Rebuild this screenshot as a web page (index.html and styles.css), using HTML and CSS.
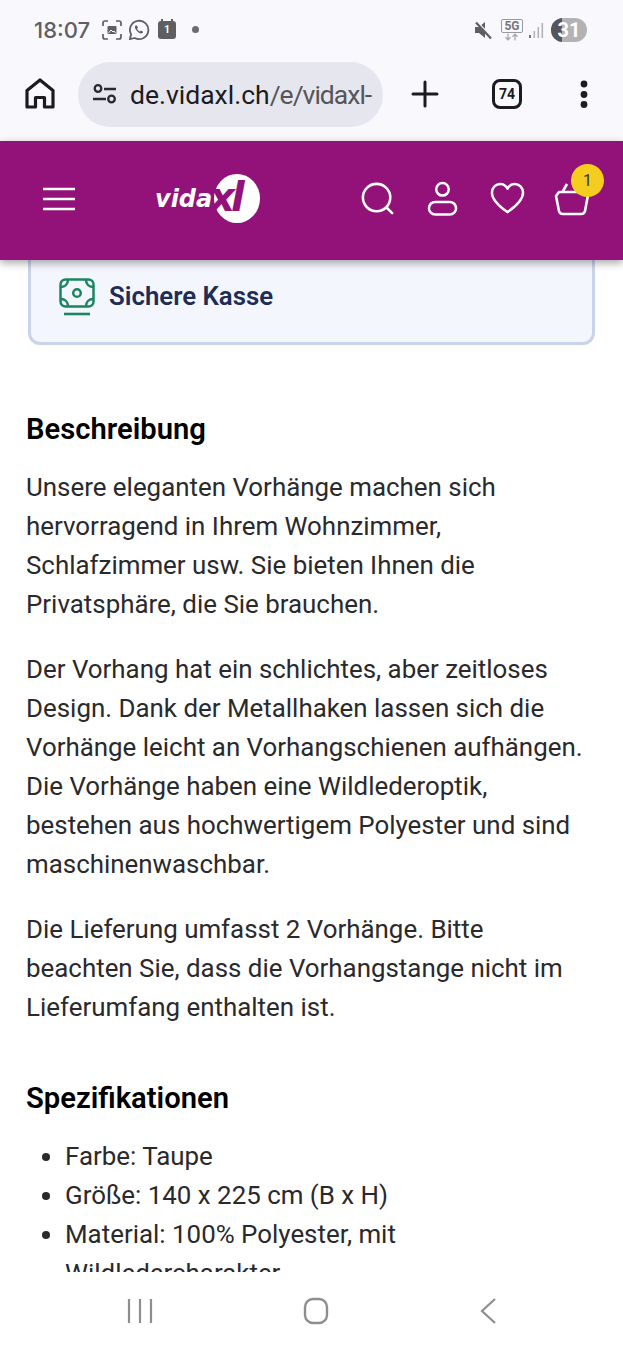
FILE: index.html
```html
<!DOCTYPE html>
<html lang="de">
<head>
  <meta charset="UTF-8">
  <meta name="viewport" content="width=device-width, initial-scale=1.0">
  <title>vidaXL</title>
  <link rel="stylesheet" href="styles.css">
</head>
<body>
  <div class="phone">
    <div class="chrome">
      <div class="status">
        <span class="time">18:07</span>
        <svg class="st-icon" width="22" height="22" viewBox="0 0 22 22" fill="none" stroke="#5f5f63" stroke-width="1.7">
          <path d="M2 7V4a2 2 0 0 1 2-2h3M15 2h3a2 2 0 0 1 2 2v3M20 15v3a2 2 0 0 1-2 2h-3M7 20H4a2 2 0 0 1-2-2v-3"/>
          <rect x="6.5" y="7" width="9" height="8" rx="1" fill="#5f5f63" stroke="none"/>
          <path d="M7.5 14l2.5-3 2 2 1-1 1.5 2" stroke="#f8f8fd" stroke-width="1"/>
        </svg>
        <svg class="st-icon" width="22" height="22" viewBox="0 0 22 22" fill="none" stroke="#5f5f63" stroke-width="1.8">
          <path d="M1.8 20.2l1.3-4.8A9.2 9.2 0 1 1 6.7 19z" stroke-linejoin="round"/>
          <path d="M7.6 6.6c-1 1-.8 2.6.6 4.5 1.5 2 3.4 3.4 4.9 3.4 1 0 2-.7 2-1.7l-2.2-1.2-1 1c-1-.3-2.2-1.5-2.8-2.8l.9-1-1-2.2z" fill="#5f5f63" stroke="none"/>
        </svg>
        <span class="cal">1</span>
        <span class="st-dot"></span>
        <span class="st-spacer"></span>
        <svg width="20" height="20" viewBox="0 0 20 20" class="st-mute">
          <path d="M1 7h4l6-5v16l-6-5H1z" fill="#5f5f63"/>
          <path d="M2 1l17 18" stroke="#f8f8fd" stroke-width="2.500"/>
          <path d="M2 2.500l15 16" stroke="#5f5f63" stroke-width="2.200"/>
        </svg>
        <div class="net">
          <span class="net-5g">5G</span>
          <svg width="16" height="8" viewBox="0 0 16 7" fill="none" stroke="#a8a8ac" stroke-width="1.300"><path d="M4 0v6M1.500 3.800L4 6.300l2.500-2.500M11 7V1M8.500 3.200L11 .7l2.500 2.500"/></svg>
        </div>
        <svg class="signal" width="16" height="20" viewBox="0 0 16 20" fill="#b4b4b8">
          <rect x="0" y="15" width="2" height="3" fill="#76767a"/><rect x="4.500" y="11" width="1.600" height="7"/><rect x="8.500" y="7" width="1.600" height="11"/><rect x="12.500" y="3" width="1.600" height="15"/>
        </svg>
        <div class="battery"><span class="batt-fill"></span><span class="batt-num">31</span></div>
      </div>
      <div class="toolbar">
        <svg class="home" width="32" height="34" viewBox="0 0 32 34" fill="none" stroke="#1c1c20" stroke-width="3.200" stroke-linejoin="round">
          <path d="M3 30V13.500L16 3l13 10.500V30h-8.500v-9.500h-9V30z"/>
        </svg>
        <div class="urlbar">
          <svg width="28" height="24" viewBox="0 0 28 24" fill="none" stroke="#2a2a2e" stroke-width="2.300">
            <circle cx="7" cy="6.500" r="3.300"/><path d="M13 7h12M2 17h13"/><circle cx="20.500" cy="17" r="3.300"/>
          </svg>
          <span class="url"><b>de.vidaxl.ch</b>/e/vidaxl-</span>
        </div>
        <svg class="plus" width="28" height="28" viewBox="0 0 28 28" stroke="#1c1c20" stroke-width="3" stroke-linecap="round"><path d="M14 2v24M2 14h24"/></svg>
        <span class="tabs">74</span>
        <svg class="more" width="10" height="28" viewBox="0 0 10 28" fill="#1c1c20"><circle cx="5" cy="4" r="3.400"/><circle cx="5" cy="14.500" r="3.400"/><circle cx="5" cy="24.500" r="3.400"/></svg>
      </div>
    </div>

    <header class="site-header">
      <svg class="burger" width="32" height="24" viewBox="0 0 32 24" stroke="#fff" stroke-width="2.400"><path d="M0 2h32M0 12h32M0 22h32"/></svg>
      <div class="logo"><span class="logo-vida">vida</span><span class="logo-xl">xl</span></div>
      <div class="header-icons">
        <svg width="34" height="34" viewBox="0 0 36 36" fill="none" stroke="#fff" stroke-width="2.700" stroke-linecap="round"><circle cx="16.500" cy="16.500" r="14.500"/><path d="M27 27l6 6"/></svg>
        <svg width="31" height="36" viewBox="0 0 32 36" fill="none" stroke="#fff" stroke-width="2.600"><circle cx="16" cy="8" r="6.500"/><rect x="2" y="21" width="28" height="13" rx="6.500"/></svg>
        <svg width="35" height="33" viewBox="0 0 36 34" fill="none" stroke="#fff" stroke-width="2.600" stroke-linejoin="round"><path d="M18 31C8 24 2 18 2 11c0-5 4-9 8.500-9 3.500 0 6 2 7.500 5 1.500-3 4-5 7.500-5C30 2 34 6 34 11c0 7-6 13-16 20z"/></svg>
        <div class="cart">
          <svg width="36" height="36" viewBox="0 0 36 36" fill="none" stroke="#fff" stroke-width="2.600" stroke-linejoin="round"><path d="M13 3L9 10M5 11h27l2 3-3 16a4 4 0 0 1-4 3H9a4 4 0 0 1-4-3L2 15z"/></svg>
          <span class="cart-badge">1</span>
        </div>
      </div>
    </header>

    <main class="content">
      <div class="secure-card">
        <svg width="36" height="38" viewBox="0 0 36 38" fill="none" stroke="#1b8560" stroke-width="2.500">
          <rect x="1.500" y="1.500" width="33" height="27" rx="5"/>
          <circle cx="18" cy="15" r="3.800"/>
          <path d="M2 9c4 0 7-3 7-7.500M34 9c-4 0-7-3-7-7.500M2 21c4 0 7 3 7 7.500M34 21c-4 0-7 3-7 7.500"/>
          <path d="M5 36h26" stroke-width="2.600"/>
        </svg>
        <span class="secure-label">Sichere Kasse</span>
      </div>

      <h2 class="first">Beschreibung</h2>
      <p>Unsere eleganten Vorhänge machen sich hervorragend in Ihrem Wohnzimmer, Schlafzimmer usw. Sie bieten Ihnen die Privatsphäre, die Sie brauchen.</p>
      <p>Der Vorhang hat ein schlichtes, aber zeitloses Design. Dank der Metallhaken lassen sich die Vorhänge leicht an Vorhangschienen aufhängen. Die Vorhänge haben eine Wildlederoptik, bestehen aus hochwertigem Polyester und sind maschinenwaschbar.</p>
      <p>Die Lieferung umfasst 2 Vorhänge. Bitte beachten Sie, dass die Vorhangstange nicht im Lieferumfang enthalten ist.</p>

      <h2>Spezifikationen</h2>
      <ul>
        <li>Farbe: Taupe</li>
        <li>Größe: 140 x 225 cm (B x H)</li>
        <li>Material: 100% Polyester, mit Wildledercharakter</li>
      </ul>
    </main>

    <nav class="android-nav">
      <svg width="26" height="26" viewBox="0 0 26 26" stroke="#8e8e92" stroke-width="2.200"><path d="M2 1v24M13 1v24M24 1v24"/></svg>
      <svg width="26" height="28" viewBox="0 0 26 28" fill="none" stroke="#8e8e92" stroke-width="2.400"><rect x="2" y="2" width="22" height="24" rx="8"/></svg>
      <svg width="18" height="28" viewBox="0 0 18 28" fill="none" stroke="#8e8e92" stroke-width="2.200"><path d="M16 2L3 14l13 12"/></svg>
    </nav>
  </div>
</body>
</html>
```

FILE: styles.css
```css
html, body {
  margin: 0;
  padding: 0;
  background: #fff;
}
.phone {
  width: 623px;
  height: 1350px;
  display: flex;
  flex-direction: column;
  overflow: hidden;
  font-family: Roboto, "Noto Sans", sans-serif;
}

/* browser chrome */
.chrome {
  height: 141px;
  flex: none;
  background: #f8f8fd;
  box-sizing: border-box;
}
.status {
  height: 61px;
  padding: 0 36px 2px 34px;
  box-sizing: border-box;
  display: flex;
  align-items: center;
  color: #5f5f63;
}
.time {
  font-family: Inter, Roboto, sans-serif;
  font-size: 22px;
  font-weight: 500;
  margin-right: 11px;
}
.st-icon {
  margin-right: 5px;
}
.cal {
  position: relative;
  width: 18px;
  height: 18px;
  background: #5f5f63;
  border-radius: 3px;
  color: #fff;
  font-size: 10px;
  font-weight: 700;
  display: flex;
  align-items: center;
  justify-content: center;
  margin-left: 3px;
}
.cal::before {
  content: "";
  position: absolute;
  top: -2px;
  left: 3px;
  right: 3px;
  height: 2px;
  border-left: 2px solid #5f5f63;
  border-right: 2px solid #5f5f63;
}
.st-dot {
  width: 7px;
  height: 7px;
  border-radius: 50%;
  background: #6c6c70;
  margin-left: 16px;
}
.st-spacer {
  flex: 1;
}
.st-mute {
  margin-right: 8px;
}
.net {
  display: flex;
  flex-direction: column;
  align-items: center;
  width: 20px;
  margin-right: 7px;
}
.net-5g {
  font-size: 12px;
  line-height: 12px;
  font-weight: 700;
  color: #76767a;
  border: 1px solid #9a9a9e;
  border-radius: 2px;
  padding: 0 2px;
}
.signal {
  margin-right: 6px;
}
.battery {
  position: relative;
  width: 36px;
  height: 24px;
  border-radius: 12px;
  overflow: hidden;
  background: #b3b3b6;
  color: #fff;
  display: flex;
  align-items: center;
  justify-content: center;
  font-size: 20px;
  font-weight: 700;
}
.batt-fill {
  position: absolute;
  left: 0;
  top: 0;
  bottom: 0;
  width: 11px;
  background: #56565a;
}
.batt-num {
  position: relative;
}
.toolbar {
  height: 66px;
  display: flex;
  align-items: center;
  padding: 0 0 0 24px;
}
.home {
  flex: none;
}
.urlbar {
  width: 305px;
  height: 65px;
  margin-left: 22px;
  box-sizing: border-box;
  padding-left: 13px;
  background: #e6e6ef;
  border-radius: 33px;
  display: flex;
  align-items: center;
  gap: 11px;
  flex: none;
}
.url {
  font-size: 26.500px;
  letter-spacing: -1px;
  color: #55555a;
  white-space: nowrap;
}
.url b {
  font-weight: 400;
  letter-spacing: 0;
  color: #1c1c20;
}
.plus {
  margin-left: 28px;
  flex: none;
}
.tabs {
  width: 30px;
  height: 30px;
  margin-left: 53px;
  flex: none;
  box-sizing: border-box;
  border: 3px solid #1c1c20;
  border-radius: 8px;
  font-size: 14px;
  font-weight: 700;
  color: #1c1c20;
  display: flex;
  align-items: center;
  justify-content: center;
}
.more {
  margin-left: 57px;
  flex: none;
}

/* vidaXL header */
.site-header {
  height: 119px;
  flex: none;
  position: relative;
  z-index: 2;
  background: #921279;
  box-shadow: 0 3px 8px rgba(0, 0, 0, 0.35);
  display: flex;
  align-items: center;
  padding: 0 33px 4px 43px;
  box-sizing: border-box;
}
.logo {
  display: flex;
  align-items: center;
  margin-left: 80px;
}
.logo-vida {
  font-family: "DejaVu Sans", sans-serif;
  font-style: italic;
  font-weight: 700;
  font-size: 24px;
  line-height: 46px;
  color: #fff;
}
.logo-xl {
  width: 46px;
  height: 49px;
  margin-left: 2px;
  border-radius: 50%;
  background: #fff;
  color: #921279;
  font-family: "DejaVu Sans", sans-serif;
  font-style: italic;
  font-weight: 700;
  font-size: 40px;
  line-height: 46px;
  letter-spacing: -4px;
  text-indent: -5px;
  flex: none;
}
.header-icons {
  margin-left: auto;
  display: flex;
  align-items: center;
  gap: 32px;
}
.header-icons svg {
  display: block;
}
.cart {
  position: relative;
  margin-left: -3px;
}
.cart-badge {
  position: absolute;
  top: -17px;
  right: -14px;
  width: 33px;
  height: 33px;
  border-radius: 50%;
  background: #f4cd1e;
  color: #333;
  font-size: 16px;
  display: flex;
  align-items: center;
  justify-content: center;
}

/* page content */
.content {
  flex: 1;
  min-height: 0;
  overflow: hidden;
  padding: 0 32px 0 26px;
  background: #fff;
  color: #2a2a2d;
  font-size: 25.900px;
  line-height: 39px;
}
.secure-card {
  height: 85px;
  margin-right: -4px;
  margin-left: 2px;
  box-sizing: border-box;
  background: #f3f6fd;
  border: 3px solid #c9d3ea;
  border-top: none;
  border-radius: 0 0 12px 12px;
  display: flex;
  align-items: center;
  gap: 14px;
  padding-left: 28px;
  padding-bottom: 9px;
}
.secure-label {
  font-size: 25.800px;
  font-weight: 600;
  color: #1f2c55;
}
h2 {
  margin: 52px 0 20px;
  font-size: 29.200px;
  line-height: 38px;
  font-weight: 600;
  color: #000;
}
h2.first {
  margin-top: 65px;
}
p {
  margin: 0 0 26px;
}
ul {
  margin: 0;
  padding-left: 39px;
}
.android-nav {
  height: 78px;
  flex: none;
  background: #fff;
  display: flex;
  align-items: center;
  padding: 0 126px 0 127px;
  justify-content: space-between;
}
```
